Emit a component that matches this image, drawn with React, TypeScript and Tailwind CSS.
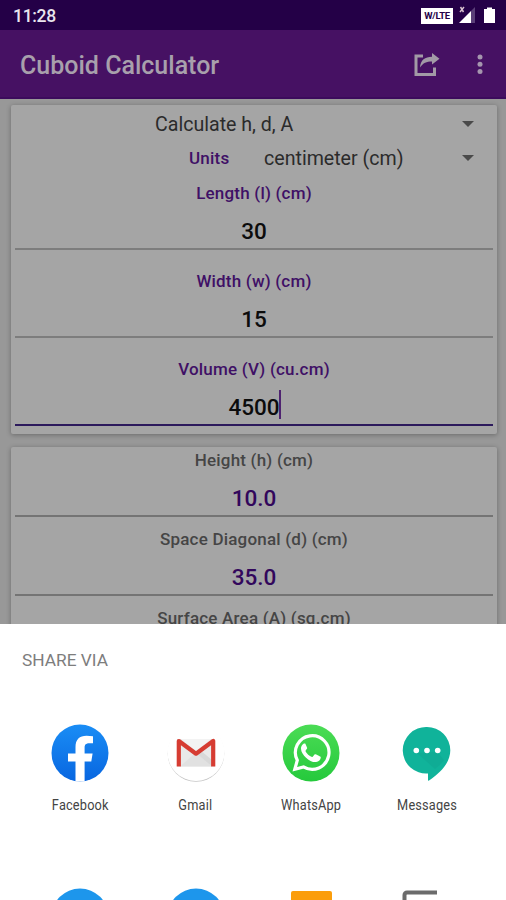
import React from 'react';

type FieldProps = {
  label: string;
  value: string;
  focused?: boolean;
};

const Field = ({ label, value, focused }: FieldProps) => {
  return (
    <div className="h-[88px] px-1">
      <div className="h-[37px] flex items-center justify-center text-[17px] tracking-[0.2px] font-medium text-[#3f1066]">
        {label}
      </div>
      <div
        className={
          focused
            ? 'h-[38px] pt-1 flex items-center justify-center border-b-2 border-[#2c1a5c]'
            : 'h-[38px] pt-1 flex items-center justify-center border-b-2 border-[#7d7d7d]'
        }
      >
        <span className="relative text-[22.5px] font-medium text-[#0c0c0c]">
          {value}
          {focused && <span className="absolute -right-px -top-px h-[29px] w-[2px] bg-[#4e2270]"></span>}
        </span>
      </div>
    </div>
  );
};

const Result = ({ label, value }: { label: string; value?: string }) => {
  return (
    <div className="h-[79px] px-1">
      <div className="h-[27px] flex items-center justify-center text-[17px] tracking-[0.2px] font-medium text-[#454545]">
        {label}
      </div>
      {value && (
        <div className="mt-1 h-[39px] pt-[5px] flex items-center justify-center border-b-2 border-[#747474] text-[22.5px] font-medium text-[#32075c]">
          {value}
        </div>
      )}
    </div>
  );
};

const Caret = () => (
  <svg width="12" height="6" viewBox="0 0 12 6">
    <path d="M0 0h12L6 6z" fill="#4a4a4a" />
  </svg>
);

const FacebookIcon = () => (
  <svg width="58" height="58" viewBox="0 0 58 58">
    <defs>
      <linearGradient id="fb" x1="0" y1="0" x2="0" y2="1">
        <stop offset="0" stopColor="#1a8df5" />
        <stop offset="1" stopColor="#0866e0" />
      </linearGradient>
    </defs>
    <circle cx="29" cy="29" r="28.5" fill="url(#fb)" />
    <path
      d="M24.500 57.200V37.500H17V29.500h7.500V23c0-7.500 4-11.300 11-11.300 2.500 0 4.500.2 6.500.5v7h-3.600c-3.600 0-4.800 1.600-4.800 4.200v6.100h8L40.300 37.500h-6.700v19.700c-3 .5-6.100.5-9.100 0z"
      fill="#fff"
    />
  </svg>
);

const GmailIcon = () => (
  <svg width="58" height="58" viewBox="0 0 58 58">
    <circle cx="29" cy="29.500" r="28.300" fill="#c4c4c4" />
    <circle cx="29" cy="28.500" r="28.500" fill="#fff" />
    <path d="M10 15h38v27.500H10z" fill="#e9e9e9" />
    <path d="M13 42.500l16-14 16 14z" fill="#e1e1e1" />
    <path d="M29 29l4-3 12 10v6.500z" fill="#d8d8d8" />
    <path d="M14 15h30L29 27z" fill="#f3f3f3" />
    <path d="M11.800 42.500V17L29 29.700 46.200 17v25.500" fill="none" stroke="#d63c32" strokeWidth="4.200" strokeLinejoin="round" />
  </svg>
);

const WhatsAppIcon = () => (
  <svg width="58" height="58" viewBox="0 0 58 58">
    <defs>
      <linearGradient id="wa" x1="0" y1="0" x2="0" y2="1">
        <stop offset="0" stopColor="#4bdc55" />
        <stop offset="1" stopColor="#25c93c" />
      </linearGradient>
    </defs>
    <circle cx="29" cy="29" r="28.500" fill="url(#wa)" />
    <path
      d="M12.800 45.300l2.500-9A16.800 16.800 0 1 1 21.500 42.900z"
      fill="none"
      stroke="#fff"
      strokeWidth="3.200"
      strokeLinejoin="miter"
    />
    <path
      d="M22.300 19.500c-.6 0-3.300 1.800-3.300 5.200 0 3.300 2.600 6.500 4.800 8.700 3.200 3.200 6.800 4.900 10.300 4.700 2.600-.2 4.700-2.100 4.700-5 0-.6-5.200-3.100-5.900-2.900-.8.200-2 3-2.900 2.800-2.800-.9-5.200-3.300-6.500-5.800-.3-.8 1.900-2.300 1.700-3.100l-1.800-4.300c-.2-.4-.7-.4-1.100-.3z"
      fill="#fff"
    />
  </svg>
);

const MessagesIcon = () => (
  <svg width="58" height="58" viewBox="0 0 58 58">
    <path
      d="M29 3a23.300 23.300 0 0 1 23.300 23.300c0 12-9 22-21.300 30.200-.8.400-1 .2-1-.500V49.500A23.300 23.300 0 1 1 29 3z"
      fill="#10b39a"
    />
    <path d="M19 29l20-1 7 8a50 50 0 0 1-9 9z" fill="#0fac95" />
    <circle cx="18.300" cy="26.500" r="2.800" fill="#fff" />
    <circle cx="29" cy="26.500" r="2.800" fill="#fff" />
    <circle cx="39.700" cy="26.500" r="2.800" fill="#fff" />
  </svg>
);

const shareTargets = [
  { name: 'Facebook', icon: <FacebookIcon /> },
  { name: 'Gmail', icon: <GmailIcon /> },
  { name: 'WhatsApp', icon: <WhatsAppIcon /> },
  { name: 'Messages', icon: <MessagesIcon /> },
];

const App = () => {
  return (
    <div className="w-[506px] h-[900px] overflow-hidden flex flex-col bg-[#989898] font-['Roboto',sans-serif]">
      {/* Status bar */}
      <div className="h-[30px] shrink-0 bg-[#240047] flex items-center justify-between pl-[13px] pr-[11px]">
        <span className="text-[17.5px] tracking-[-0.3px] font-medium text-[#e9e5ee] pt-0.5">11:28</span>
        <div className="flex items-center">
          <div className="w-[32px] h-[16px] mt-px bg-white text-[#240047] text-[9.5px] leading-[16px] font-bold text-center tracking-[-0.3px]">
            W/LTE
          </div>
          <svg className="ml-[6px]" width="17" height="18" viewBox="0 0 17 18">
            <path d="M0 17L12 5v12z" fill="#fff" />
            <path d="M12 5l4-4v16h-4z" fill="#5a3f78" />
            <path d="M1.500 1l3 5M5 1L1 6" stroke="#d8c0cf" strokeWidth="1.500" />
          </svg>
          <svg className="ml-[8px]" width="11" height="18" viewBox="0 0 11 18">
            <path d="M0 3h3V1.500h5V3h3v14H0z" fill="#fff" />
          </svg>
        </div>
      </div>

      {/* Toolbar */}
      <div className="h-[69px] shrink-0 bg-[#461163] border-b-2 border-[#3c0b5c] flex items-center pl-[20px] pr-[23px]">
        <h1 className="flex-1 text-[25px] font-medium text-[#a8a0ac] pt-1">Cuboid Calculator</h1>
        <svg width="26" height="24" viewBox="0 0 26 24" className="mr-[37px] mt-0.5">
          <path d="M9 3H2v18.500h18.500V14.500" fill="none" stroke="#a29aa6" strokeWidth="3" />
          <path d="M6 14.500C6.500 7 11 3.700 18 3.700V0l7.500 5.800L18 11.500V8.500C12.500 8.500 9 10 6 14.500z" fill="#a29aa6" />
        </svg>
        <svg width="6" height="21" viewBox="0 0 6 21" className="mt-0.5">
          <circle cx="3" cy="3" r="2.500" fill="#a596ae" />
          <circle cx="3" cy="10.300" r="2.500" fill="#a596ae" />
          <circle cx="3" cy="17.600" r="2.500" fill="#a596ae" />
        </svg>
      </div>

      <div className="h-[525px] shrink-0 overflow-hidden pl-[11px] pr-[9px] pt-[6px]">
        {/* Inputs */}
        <div className="h-[329px] bg-[#a5a5a5] rounded-[2px] shadow-[0_1px_5px_rgba(0,0,0,0.3)]">
          <div className="h-[38px] flex items-center text-[19.6px] text-[#2b2b2b]">
            <span className="pl-[144px] pt-0.5 flex-1">Calculate h, d, A</span>
            <span className="pr-[23px]"><Caret /></span>
          </div>
          <div className="h-[32px] flex items-center">
            <span className="pl-[178px] w-[253px] text-[17px] tracking-[0.2px] font-medium text-[#3f1066]">Units</span>
            <span className="flex-1 text-[19.6px] text-[#2b2b2b]">centimeter (cm)</span>
            <span className="pr-[23px] pb-0.5"><Caret /></span>
          </div>
          <Field label="Length (l) (cm)" value="30" />
          <Field label="Width (w) (cm)" value="15" />
          <Field label="Volume (V) (cu.cm)" value="4500" focused />
        </div>

        {/* Results */}
        <div className="mt-[13px] h-[240px] bg-[#a5a5a5] rounded-[2px] shadow-[0_1px_5px_rgba(0,0,0,0.3)]">
          <Result label="Height (h) (cm)" value="10.0" />
          <Result label="Space Diagonal (d) (cm)" value="35.0" />
          <Result label="Surface Area (A) (sq.cm)" />
        </div>
      </div>

      {/* Share sheet */}
      <div className="flex-1 bg-white">
        <div className="pt-[23px] pl-[22px] text-[17.3px] leading-[26px] text-[#7d7d7d]">SHARE VIA</div>
        <div className="mt-[51px] pl-[22px] pr-[21px] grid grid-cols-4">
          {shareTargets.map((target) => (
            <div key={target.name} className="flex flex-col items-center">
              {target.icon}
              <span className="mt-[14px] text-[14.5px] leading-[20px] tracking-[0.2px] text-[#444444] scale-x-[0.88]">{target.name}</span>
            </div>
          ))}
        </div>
        <div className="mt-[72px] pl-[22px] pr-[21px] grid grid-cols-4 justify-items-center">
          <svg width="58" height="14" viewBox="0 0 58 14">
            <circle cx="29" cy="29" r="28.500" fill="#1d96ec" />
          </svg>
          <svg width="58" height="14" viewBox="0 0 58 14">
            <circle cx="29" cy="29" r="28.500" fill="#1d96ec" />
          </svg>
          <svg width="58" height="14" viewBox="0 0 58 14">
            <rect x="9" y="3" width="41" height="30" rx="2" fill="#fb9d0b" />
          </svg>
          <svg width="58" height="14" viewBox="0 0 58 14">
            <path d="M6.500 14V7a2.500 2.500 0 0 1 2.500-2.500h30" fill="none" stroke="#6b6b6b" strokeWidth="4" />
          </svg>
        </div>
      </div>
    </div>
  );
};

export default App;
